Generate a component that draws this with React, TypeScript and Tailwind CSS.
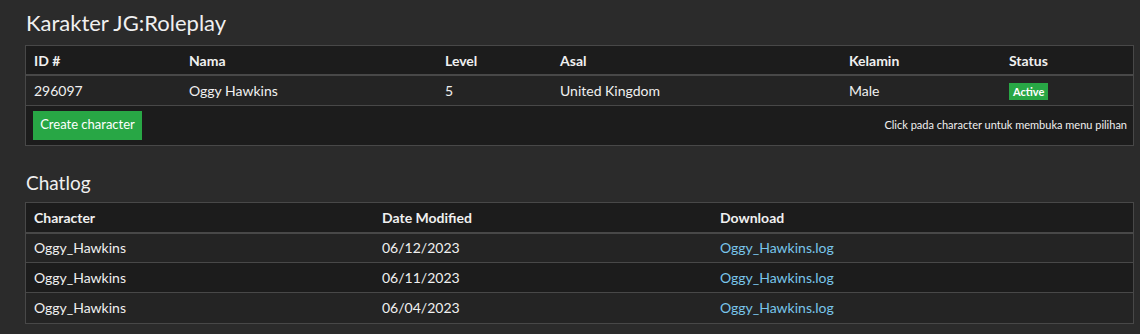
const characters = [
  { id: "296097", nama: "Oggy Hawkins", level: 5, asal: "United Kingdom", kelamin: "Male", status: "Active" },
];

const logs = [
  { character: "Oggy_Hawkins", date: "06/12/2023", file: "Oggy_Hawkins.log" },
  { character: "Oggy_Hawkins", date: "06/11/2023", file: "Oggy_Hawkins.log" },
  { character: "Oggy_Hawkins", date: "06/04/2023", file: "Oggy_Hawkins.log" },
];

const font = { fontFamily: "Lato, 'Open Sans', sans-serif" };

export default function App() {
  return (
    <div className="min-h-[334px] w-[1140px] bg-[#2b2b2b] text-[#f0f0f0] pl-[25px] pr-[6px] pt-[9px]" style={font}>
      <h1 className="text-[22px] leading-[28px] pl-px font-normal">Karakter JG:Roleplay</h1>

      <div className="mt-[8px] border border-[#484848] bg-[#1c1c1c]">
        <table className="w-full table-fixed border-collapse text-[14px]">
          <colgroup>
            <col className="w-[155px]" />
            <col className="w-[256px]" />
            <col className="w-[115px]" />
            <col className="w-[289px]" />
            <col className="w-[160px]" />
            <col />
          </colgroup>
          <thead>
            <tr className="h-[29px] border-b-2 border-[#484848] bg-[#1c1c1c] text-left font-bold">
              <th className="px-2 pt-px">ID #</th>
              <th className="px-2 pt-px">Nama</th>
              <th className="px-2 pt-px">Level</th>
              <th className="px-2 pt-px">Asal</th>
              <th className="px-2 pt-px">Kelamin</th>
              <th className="px-2 pt-px">Status</th>
            </tr>
          </thead>
          <tbody>
            {characters.map((c) => (
              <tr key={c.id} className="h-[30px] border-b border-[#484848] bg-[#242424]">
                <td className="px-2 pt-px">{c.id}</td>
                <td className="px-2 pt-px">{c.nama}</td>
                <td className="px-2 pt-px">{c.level}</td>
                <td className="px-2 pt-px">{c.asal}</td>
                <td className="px-2 pt-px">{c.kelamin}</td>
                <td className="px-2 pt-px">
                  <span className="inline-block bg-[#28a745] px-[4px] text-[11px] leading-[17px] font-bold text-white">
                    {c.status}
                  </span>
                </td>
              </tr>
            ))}
          </tbody>
        </table>
        <div className="flex items-center justify-between h-[39px] pl-[7px] pr-[6px]">
          <button className="h-[29px] w-[109px] bg-[#28a745] text-[13px] text-white">Create character</button>
          <span className="text-[11px]">Click pada character untuk membuka menu pilihan</span>
        </div>
      </div>

      <h2 className="mt-[25px] text-[19px] leading-[24px] pl-px font-normal">Chatlog</h2>

      <div className="mt-[7px] border border-[#484848]">
        <table className="w-full table-fixed border-collapse text-[14px]">
          <colgroup>
            <col className="w-[348px]" />
            <col className="w-[338px]" />
            <col />
          </colgroup>
          <thead>
            <tr className="h-[30px] border-b-2 border-[#484848] bg-[#1c1c1c] text-left font-bold">
              <th className="px-2">Character</th>
              <th className="px-2">Date Modified</th>
              <th className="px-2">Download</th>
            </tr>
          </thead>
          <tbody>
            {logs.map((l, i) => (
              <tr
                key={l.date}
                className={`h-[30px] border-b border-[#484848] last:border-b-0 ${i % 2 === 1 ? "bg-[#1c1c1c]" : "bg-[#242424]"}`}
              >
                <td className="px-2">{l.character}</td>
                <td className="px-2">{l.date}</td>
                <td className="px-2">
                  <a href="#" className="text-[#79c5ea]">{l.file}</a>
                </td>
              </tr>
            ))}
          </tbody>
        </table>
      </div>
    </div>
  );
}
